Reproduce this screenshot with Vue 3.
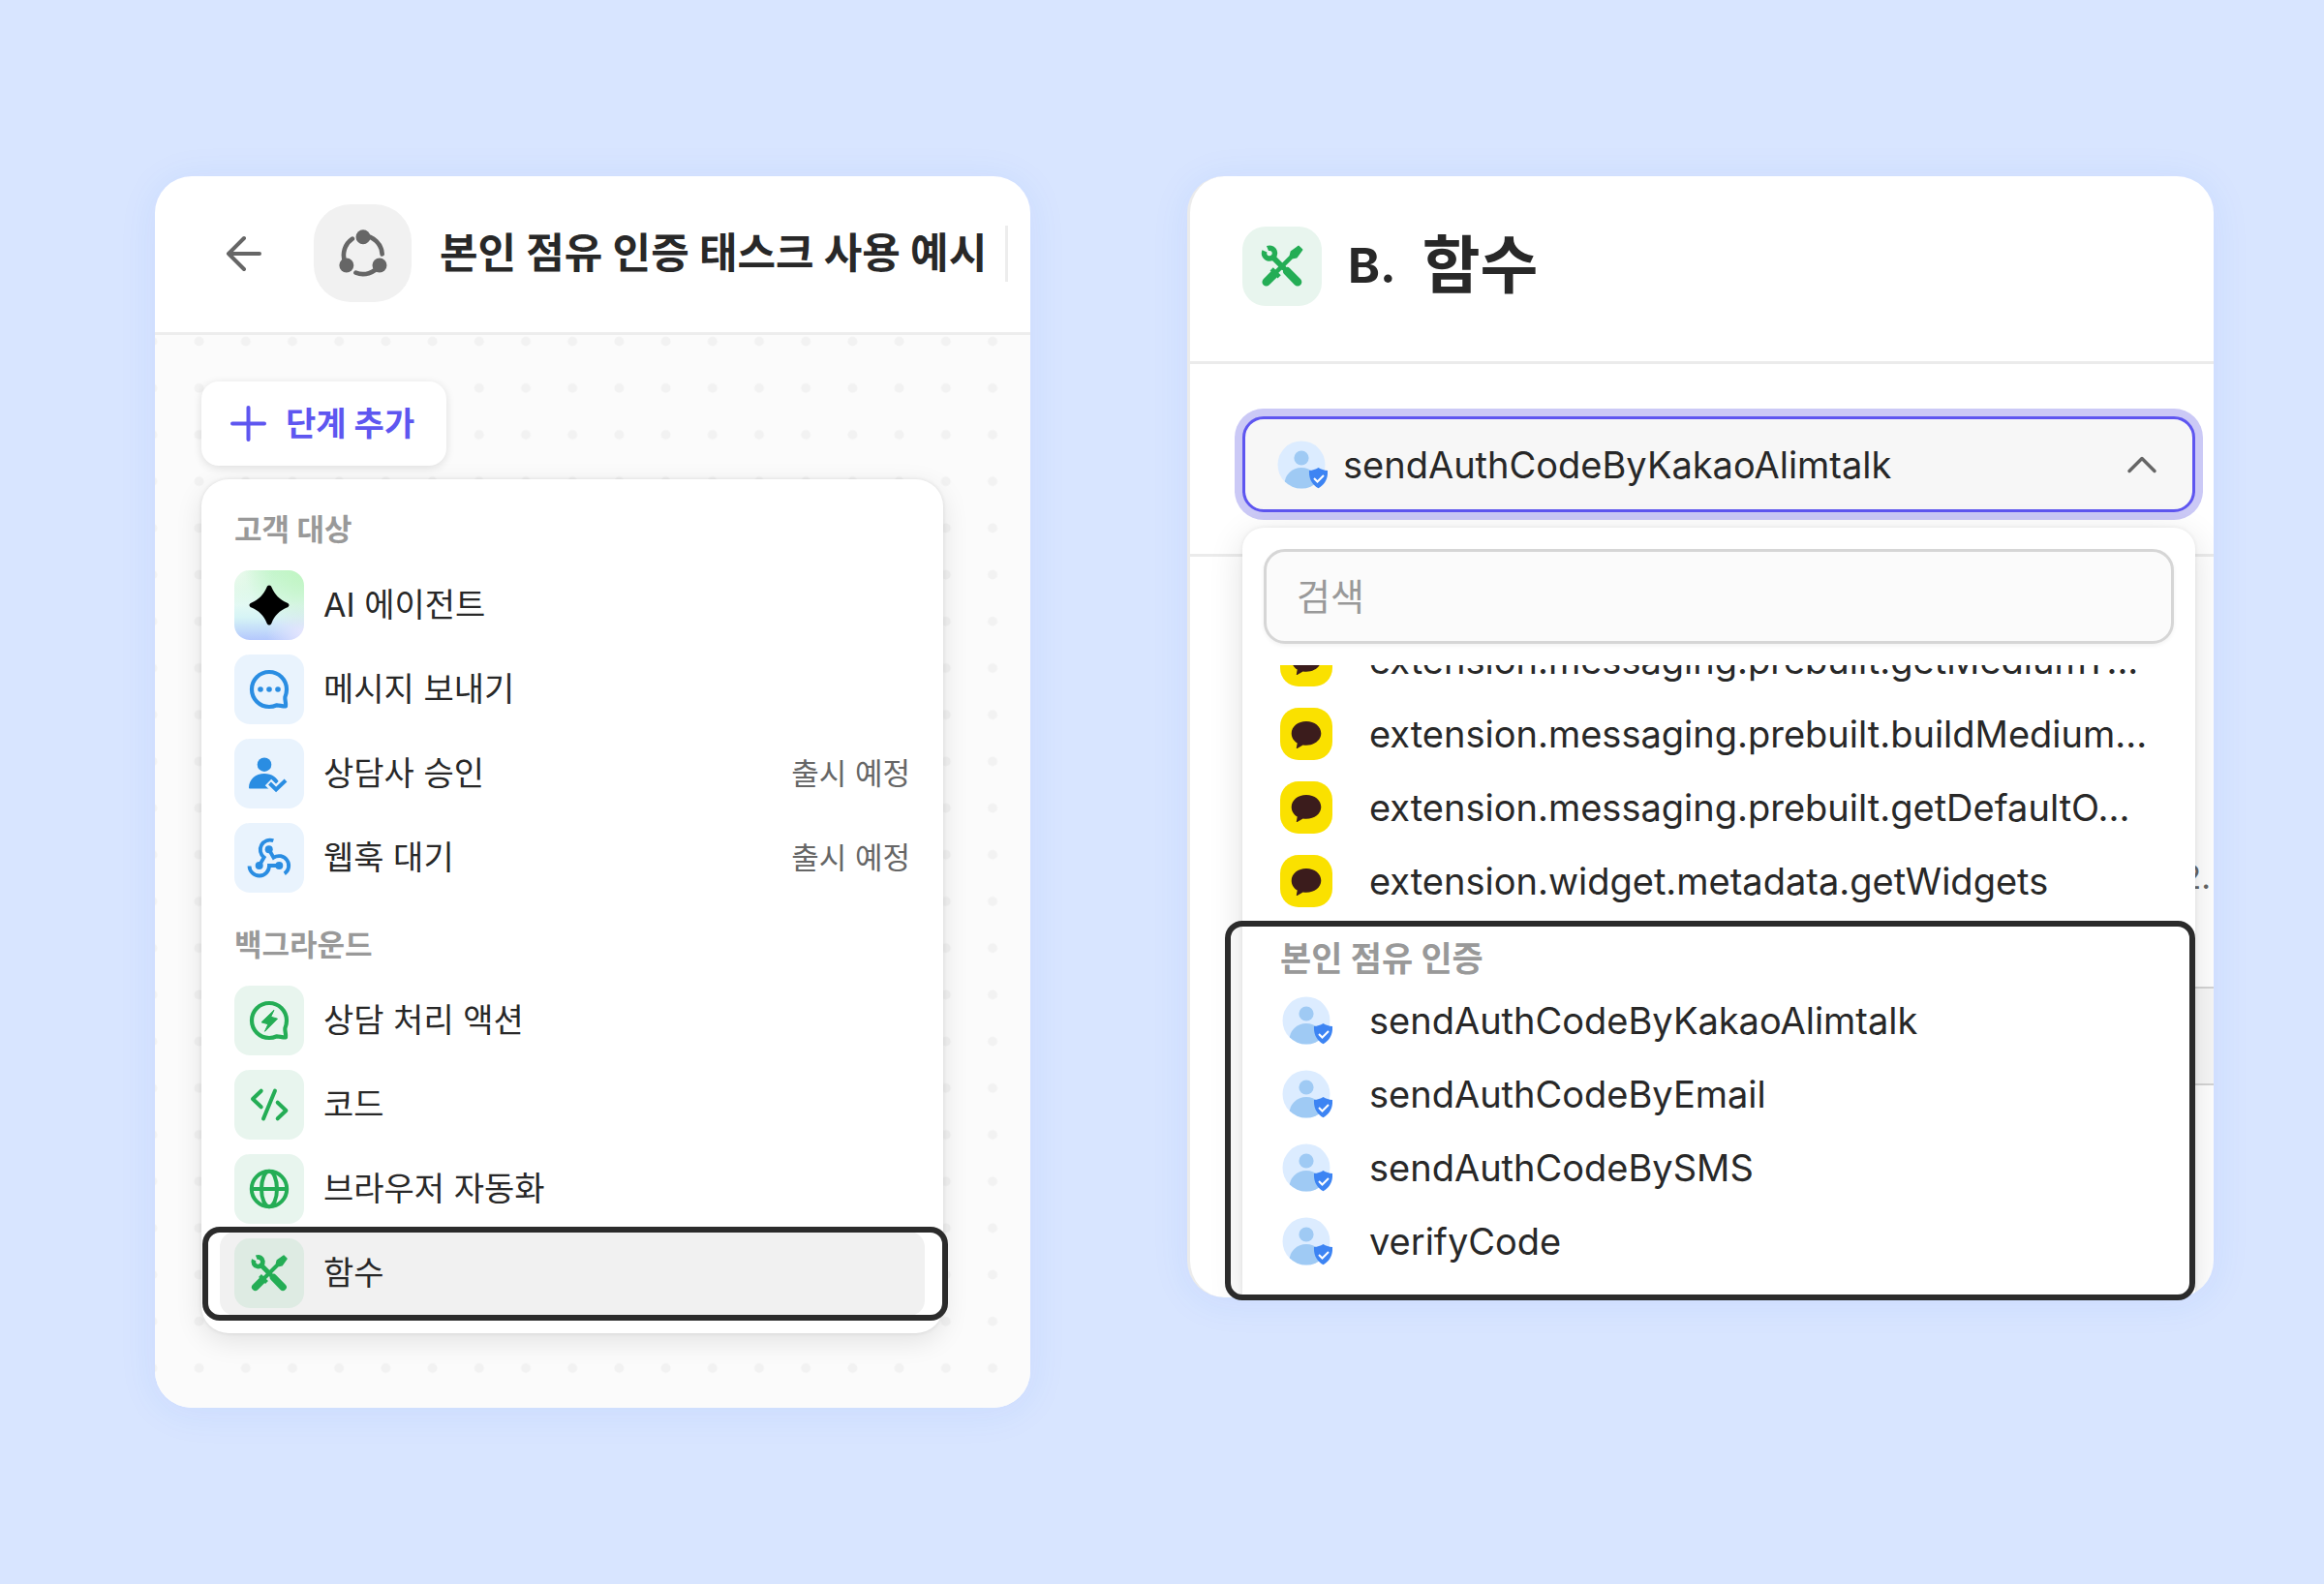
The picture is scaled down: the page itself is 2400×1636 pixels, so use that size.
<script setup>
import { ref } from "vue";

// steps offered by the "add step" menu
const stepGroups = [
    {
        title: "고객 대상",
        tone: "blue",
        items: [
            { icon: "sparkle", label: "AI 에이전트", tone: "ai" },
            { icon: "message", label: "메시지 보내기" },
            { icon: "approve", label: "상담사 승인", note: "출시 예정" },
            { icon: "webhook", label: "웹훅 대기", note: "출시 예정" },
        ],
    },
    {
        title: "백그라운드",
        tone: "green",
        items: [
            { icon: "action", label: "상담 처리 액션" },
            { icon: "code", label: "코드" },
            { icon: "globe", label: "브라우저 자동화" },
            { icon: "tools", label: "함수", active: true },
        ],
    },
];

// functions listed in the dropdown
const kakaoFunctions = [
    "extension.messaging.prebuilt.getMediumT...",
    "extension.messaging.prebuilt.buildMedium...",
    "extension.messaging.prebuilt.getDefaultO...",
    "extension.widget.metadata.getWidgets",
];

const authFunctions = [
    "sendAuthCodeByKakaoAlimtalk",
    "sendAuthCodeByEmail",
    "sendAuthCodeBySMS",
    "verifyCode",
];

const selected = ref(authFunctions[0]);
const keyword = ref("");
</script>

<template>
    <!-- icon sprite -->
    <svg class="sprite" width="0" height="0" aria-hidden="true">
        <symbol id="sparkle" viewBox="0 0 72 72">
            <path fill="currentColor" d="M36 15.5c1.200 0 2.100.9 2.600 2.300C41.500 25 47 30.500 54.200 33.400c1.400.5 2.300 1.400 2.300 2.600s-.9 2.100-2.300 2.600C47 41.500 41.500 47 38.600 54.200c-.5 1.400-1.400 2.300-2.600 2.300s-2.100-.9-2.600-2.300C30.500 47 25 41.500 17.800 38.600c-1.400-.5-2.300-1.400-2.300-2.600s.9-2.100 2.300-2.600C25 30.500 30.500 25 33.400 17.800c.5-1.400 1.400-2.300 2.600-2.300z" />
        </symbol>
        <symbol id="bubble" viewBox="0 0 72 72">
            <path fill="none" stroke="currentColor" stroke-width="4.200" stroke-linejoin="round" d="M54 36A18 18 0 1 0 36 54c3 0 5.500-.7 8-1.700 2.500 0 6 1.300 9 1.100.6-3-1-6.500-.6-9.400 1-2.500 1.600-5.200 1.600-8z" />
        </symbol>
        <symbol id="message" viewBox="0 0 72 72">
            <use href="#bubble" />
            <g fill="currentColor">
                <circle cx="27" cy="36" r="2.800" />
                <circle cx="36" cy="36" r="2.800" />
                <circle cx="45" cy="36" r="2.800" />
            </g>
        </symbol>
        <symbol id="action" viewBox="0 0 72 72">
            <use href="#bubble" />
            <path fill="currentColor" stroke="currentColor" stroke-linejoin="round" d="M41 25.300 28 37.800l6.900 2L31.500 47.300 44.500 34.200l-6.800-2z" />
        </symbol>
        <symbol id="approve" viewBox="0 0 72 72">
            <circle cx="31" cy="26.700" r="7.300" fill="currentColor" />
            <path fill="currentColor" d="M15 50.500C15 42 22 36 31 36c7.500 0 13.500 4 15.500 10L42 51.500H16.200c-.8 0-1.200-.4-1.200-1z" />
            <path fill="none" stroke="#e9f3fd" stroke-width="9" d="m35 45 8 8 12-12" />
            <path fill="none" stroke="currentColor" stroke-width="4" d="m36.500 46 6.600 6.500L53 43" />
        </symbol>
        <symbol id="webhook" viewBox="0 0 72 72">
            <g fill="none" stroke="currentColor" stroke-width="3.800">
                <path d="M40.300 18.200A10 10 0 0 0 30.700 35.500L25.700 44" />
                <path d="M35.700 27.300 40.500 35.800A9.900 9.900 0 0 1 51.800 52.400" />
                <path d="M15.500 44.500A10.200 10.200 0 0 0 36 44H46.300" />
            </g>
            <g fill="currentColor">
                <circle cx="35.700" cy="27.300" r="4" />
                <circle cx="25.700" cy="44" r="4" />
                <circle cx="46.300" cy="44" r="4" />
            </g>
        </symbol>
        <symbol id="code" viewBox="0 0 72 72">
            <path fill="none" stroke="currentColor" stroke-width="4" stroke-linecap="round" stroke-linejoin="round" d="m27.700 21.700-8.700 8.300 8.700 8.300M42 21.500 30 50.500M44.700 33.700l8.700 8.300-8.700 8.300" />
        </symbol>
        <symbol id="globe" viewBox="0 0 72 72">
            <g fill="none" stroke="currentColor" stroke-width="4">
                <circle cx="36" cy="36" r="18.200" />
                <ellipse cx="36" cy="36" rx="8" ry="18.200" />
                <path d="M18 36h36" />
            </g>
        </symbol>
        <symbol id="tools" viewBox="0 0 72 72">
            <g fill="none" stroke="currentColor" stroke-linecap="round">
                <path stroke-width="4" d="M29 43 49 23" />
                <path stroke-width="7.500" d="m21.700 50.300 6.500-6.500" />
                <path stroke-width="4" stroke-linecap="butt" d="m26.500 38.500 7 7" />
                <path stroke-width="5" d="m28 28 9 9" />
                <path stroke-width="7.500" d="m40.500 40.500 9.600 9.800" />
                <path stroke-width="4.800" stroke-linecap="butt" d="M20.200 22.300A4.800 4.800 0 1 0 22.800 19.800" />
            </g>
            <path fill="currentColor" stroke="currentColor" stroke-width="1.500" stroke-linejoin="round" d="m43.500 26 .8-3.200 6.700-4.800 3 3-4.800 6.700L46 28.500z" />
        </symbol>
        <symbol id="flow" viewBox="0 0 100 100">
            <path fill="none" stroke="currentColor" stroke-width="4.600" stroke-linecap="round" d="M39.500 35.300A20 20 0 0 0 32.300 60M50.500 32A20 20 0 0 1 70 51M67 62.500A20 20 0 0 1 43 70" />
            <g fill="currentColor">
                <circle cx="50.500" cy="33.500" r="7.400" />
                <circle cx="33.500" cy="62.300" r="7.400" />
                <circle cx="67.300" cy="62.300" r="7.400" />
            </g>
        </symbol>
        <symbol id="kakao" viewBox="0 0 54 54">
            <rect width="54" height="54" rx="19" fill="#fae100" />
            <path fill="#3b1c1c" d="M27 14c8.500 0 15.300 5.500 15.300 12.400S35.500 38.700 27 38.700c-1.200 0-2.300-.1-3.400-.3L17.600 42c-.5.300-.9-.1-.8-.6l.9-4.800c-3.700-2.300-6-6-6-10.200C11.700 19.500 18.500 14 27 14z" />
        </symbol>
        <symbol id="auth" viewBox="0 0 54 54">
            <clipPath id="face"><circle cx="27" cy="27" r="24.500" /></clipPath>
            <circle cx="27" cy="27" r="24.500" fill="#dcecff" />
            <g fill="#9fcaf4" clip-path="url(#face)">
                <circle cx="27" cy="20" r="7.600" />
                <ellipse cx="27" cy="47" rx="17.500" ry="17" />
            </g>
            <path fill="#3d84f3" d="M44.500 30c2.800 1.700 6 2.700 9.500 3 .6 8.500-3 14.700-9.500 18.300C38 47.700 34.400 41.500 35 33c3.500-.3 6.700-1.300 9.500-3z" />
            <path fill="none" stroke="#fff" stroke-width="2" d="m40 41 3.500 3.500 6.500-6.500" />
        </symbol>
    </svg>

    <main class="stage">
        <section class="card task">
            <header class="task-header">
                <button class="back" type="button" aria-label="뒤로">
                    <svg width="38" height="38" viewBox="0 0 38 38" fill="none" stroke="currentColor" stroke-width="4" stroke-linecap="round" stroke-linejoin="round">
                        <path d="M35 19H3M19 3 3 19l16 16" />
                    </svg>
                </button>
                <span class="task-icon"><svg><use href="#flow" /></svg></span>
                <h1>본인 점유 인증 태스크 사용 예시</h1>
                <span class="divider"></span>
            </header>

            <div class="canvas">
                <svg class="dots" aria-hidden="true">
                    <pattern id="dot" x="21.500" y="-17.500" width="48.200" height="48.200" patternUnits="userSpaceOnUse">
                        <circle cx="24.100" cy="24.100" r="5" fill="#f2f2f2" />
                    </pattern>
                    <rect width="100%" height="100%" fill="url(#dot)" />
                </svg>

                <button class="add-step" type="button">
                    <svg width="37" height="37" viewBox="0 0 37 37" fill="none" stroke="currentColor" stroke-width="4" stroke-linecap="round">
                        <path d="M18.500 2v33M2 18.500h33" />
                    </svg>
                    단계 추가
                </button>

                <div class="menu">
                    <template v-for="group in stepGroups" :key="group.title">
                        <h2 class="menu-title">{{ group.title }}</h2>
                        <ul>
                            <li v-for="item in group.items" :key="item.icon" class="menu-item">
                                <button class="step" :class="{ active: item.active }" type="button">
                                    <span class="tile" :class="item.tone || group.tone">
                                        <svg><use :href="'#' + item.icon" /></svg>
                                    </span>
                                    <span class="step-label">{{ item.label }}</span>
                                    <span v-if="item.note" class="step-note">{{ item.note }}</span>
                                </button>
                                <span v-if="item.active" class="frame step-frame"></span>
                            </li>
                        </ul>
                    </template>
                </div>
            </div>
        </section>

        <div class="fn-wrap">
            <section class="card fn">
                <header class="fn-header">
                    <span class="tile green large"><svg><use href="#tools" /></svg></span>
                    <span class="fn-index">B.</span>
                    <h1>함수</h1>
                </header>

                <div class="fn-picker">
                    <label class="select">
                        <svg class="row-icon"><use href="#auth" /></svg>
                        <select v-model="selected" aria-label="함수">
                            <option v-for="name in authFunctions" :key="name">{{ name }}</option>
                        </select>
                        <svg width="32" height="20" viewBox="0 0 32 20" fill="none" stroke="#666" stroke-width="3.500" stroke-linecap="round" stroke-linejoin="round">
                            <path d="m3 16.500 13-13 13 13" />
                        </svg>
                    </label>
                </div>

                <div class="fn-body">
                    <p>2.</p>
                    <div class="fn-field"></div>
                </div>

                <div class="popover">
                    <input v-model="keyword" class="search" type="text" placeholder="검색" aria-label="검색" />
                    <div class="results">
                        <ul>
                            <li v-for="name in kakaoFunctions" :key="name">
                                <button class="row" type="button">
                                    <svg class="row-icon"><use href="#kakao" /></svg>
                                    {{ name }}
                                </button>
                            </li>
                        </ul>
                        <h2 class="results-title">본인 점유 인증</h2>
                        <ul>
                            <li v-for="name in authFunctions" :key="name">
                                <button class="row" type="button" @click="selected = name">
                                    <svg class="row-icon"><use href="#auth" /></svg>
                                    {{ name }}
                                </button>
                            </li>
                        </ul>
                    </div>
                </div>
            </section>
            <span class="frame fn-frame"></span>
        </div>
    </main>
</template>

<style>
body {
    margin: 0;
    background: #d8e5ff;
}
</style>

<style scoped>
.sprite {
    position: absolute;
}

.stage {
    display: flex;
    align-items: flex-start;
    gap: 162px;
    box-sizing: border-box;
    min-height: 100vh;
    padding: 182px 114px 182px 160px;
    color: #282828;
    font-family: Inter, "Noto Sans CJK KR", sans-serif;
}

h1,
h2,
p,
ul {
    margin: 0;
    padding: 0;
}

ul {
    list-style: none;
}

button {
    border: 0;
    padding: 0;
    background: none;
    color: inherit;
    font: inherit;
    text-align: left;
    cursor: pointer;
}

svg {
    display: block;
    flex: none;
}

.card {
    overflow: hidden;
    border-radius: 38px;
    background: #fff;
    box-shadow: 0 4px 40px rgba(40, 100, 240, 0.08);
}

.frame {
    position: absolute;
    box-sizing: border-box;
    border: 6px solid #2b2b2b;
    border-radius: 18px;
    pointer-events: none;
}

/* task card */
.task {
    flex: 904 1 0;
    min-width: 0;
}

.task-header {
    display: flex;
    align-items: center;
    padding: 29px 23px 31px 73px;
    border-bottom: 3px solid #ededed;
}

.back {
    color: #666;
}

.task-icon {
    width: 101px;
    height: 101px;
    margin: 0 29px 0 53px;
    border-radius: 38px;
    background: #f1f1f1;
    color: #666;
}

.task-icon svg {
    width: 101px;
    height: 101px;
}

.task-header h1 {
    flex: 1;
    padding-bottom: 2px;
    font-size: 43px;
    line-height: 60px;
    font-weight: 700;
    white-space: nowrap;
}

.divider {
    width: 3px;
    height: 58px;
    background: #ededed;
}

.canvas {
    position: relative;
    padding: 48px 90px 77px 48px;
    background: #fbfbfb;
}

.dots {
    position: absolute;
    inset: 0;
    width: 100%;
    height: 100%;
}

.add-step {
    position: relative;
    display: flex;
    align-items: center;
    gap: 20px;
    height: 87px;
    padding: 0 33px 0 30px;
    border-radius: 18px;
    background: #fff;
    box-shadow: 0 2px 10px rgba(0, 0, 0, 0.12);
    color: #5e56f0;
    font-size: 34px;
    font-weight: 700;
    line-height: 48px;
}

.menu {
    position: relative;
    margin-top: 14px;
    padding: 6px 19px 18px;
    border-radius: 28px;
    background: #fff;
    box-shadow: 0 8px 28px rgba(0, 0, 0, 0.1), 0 0 4px rgba(0, 0, 0, 0.1);
}

.menu-title {
    padding: 24px 15px 13px;
    color: #999;
    font-size: 31px;
    line-height: 44px;
    font-weight: 700;
}

.menu-item {
    position: relative;
}

.step {
    display: flex;
    align-items: center;
    width: 100%;
    padding: 7px 15px 8px;
    border-radius: 16px;
}

.step.active {
    background: #f1f1f1;
}

.tile {
    flex: none;
    width: 72px;
    height: 72px;
    border-radius: 16px;
}

.tile svg {
    width: 100%;
    height: 100%;
}

.tile.ai {
    background:
        radial-gradient(circle at 100% 0, #c0f5c2 0, rgba(192, 245, 194, 0) 60%),
        radial-gradient(circle at 0 0, #eefaf0 0, rgba(238, 250, 240, 0) 40%),
        radial-gradient(circle at 100% 90%, #e6e6fe 0, rgba(230, 230, 254, 0) 40%),
        linear-gradient(#c8f6d4 0, #e2f9f4 50%, #d6f4f6 68%, #b4c8fd 100%);
    color: #000;
}

.tile.blue {
    background: #e9f3fd;
    color: #2a8de2;
}

.tile.green {
    background: #e8f5ee;
    color: #24ad55;
}

.active .tile.green {
    background: #deebe3;
}

.step-label {
    flex: 1;
    margin-left: 20px;
    font-size: 34px;
    line-height: 48px;
}

.step-note {
    color: #666;
    font-size: 31px;
    line-height: 48px;
}

.step-frame {
    inset: -5px -24px -5px -18px;
}

/* function card */
.fn-wrap {
    position: relative;
    flex: 1060 1 0;
    min-width: 0;
}

.fn {
    position: relative;
    box-sizing: border-box;
    border-left: 3px solid #ebebeb;
}

.fn-header {
    display: flex;
    align-items: center;
    padding: 52px 54px 57px;
    border-bottom: 3px solid #ebebeb;
}

.tile.large {
    width: 82px;
    height: 82px;
    border-radius: 24px;
}

.fn-index {
    margin-left: 27px;
    padding-bottom: 2px;
    font-size: 50px;
    line-height: 72px;
    font-weight: 700;
}

.fn-header h1 {
    margin-left: 27px;
    padding-bottom: 2px;
    font-size: 65px;
    line-height: 72px;
    font-weight: 700;
}

.fn-picker {
    padding: 54px 19px 43px 54px;
    border-bottom: 3px solid #ebebeb;
}

.select {
    display: flex;
    align-items: center;
    box-sizing: border-box;
    height: 99px;
    padding: 0 36px 0 31px;
    border: 3px solid #5e56f0;
    border-radius: 22px;
    background: #f7f7f7;
    box-shadow: 0 0 0 8px #cbc9f6;
}

.select select {
    flex: 1;
    min-width: 0;
    margin-left: 16px;
    padding: 0;
    border: 0;
    outline: 0;
    appearance: none;
    background: none;
    color: inherit;
    font: inherit;
    font-size: 38px;
    line-height: 54px;
}

.row-icon {
    width: 54px;
    height: 54px;
}

.fn-body {
    padding: 309px 0 219px 54px;
}

.fn-body p {
    padding: 0 3px 91px 0;
    color: #666;
    font-size: 34px;
    line-height: 44px;
    text-align: right;
}

.fn-field {
    box-sizing: border-box;
    height: 102px;
    border: 2px solid #d4d4d4;
    border-right: 0;
    border-radius: 22px 0 0 22px;
    background: #f7f7f7;
}

.popover {
    position: absolute;
    inset: 363px 19px 0 54px;
    overflow: hidden;
    display: flex;
    flex-direction: column;
    border-radius: 22px 22px 0 0;
    background: #fff;
    box-shadow: 0 8px 36px rgba(0, 0, 0, 0.12), 0 0 4px rgba(0, 0, 0, 0.08);
}

.search {
    flex: none;
    box-sizing: border-box;
    height: 98px;
    margin: 22px;
    padding: 0 31px;
    border: 3px solid #d6d6d6;
    border-radius: 22px;
    outline: 0;
    background: #fbfbfb;
    box-shadow: 0 2px 4px rgba(0, 0, 0, 0.05);
    color: inherit;
    font: inherit;
    font-size: 38px;
}

.search::placeholder {
    color: #999;
    opacity: 1;
}

.results {
    flex: 1;
    min-height: 0;
    overflow: hidden;
}

/* the list is scrolled part of the way into its first row */
.results ul:first-child {
    margin-top: -43px;
}

.results-title {
    padding: 20px 39px 4px;
    color: #999;
    font-size: 35px;
    line-height: 44px;
    font-weight: 700;
}

.row {
    display: flex;
    align-items: center;
    gap: 38px;
    width: 100%;
    height: 76px;
    padding: 0 39px;
    font-size: 38px;
    line-height: 54px;
    white-space: nowrap;
}

.fn-frame {
    inset: 769px 19px -3px 39px;
}
</style>
